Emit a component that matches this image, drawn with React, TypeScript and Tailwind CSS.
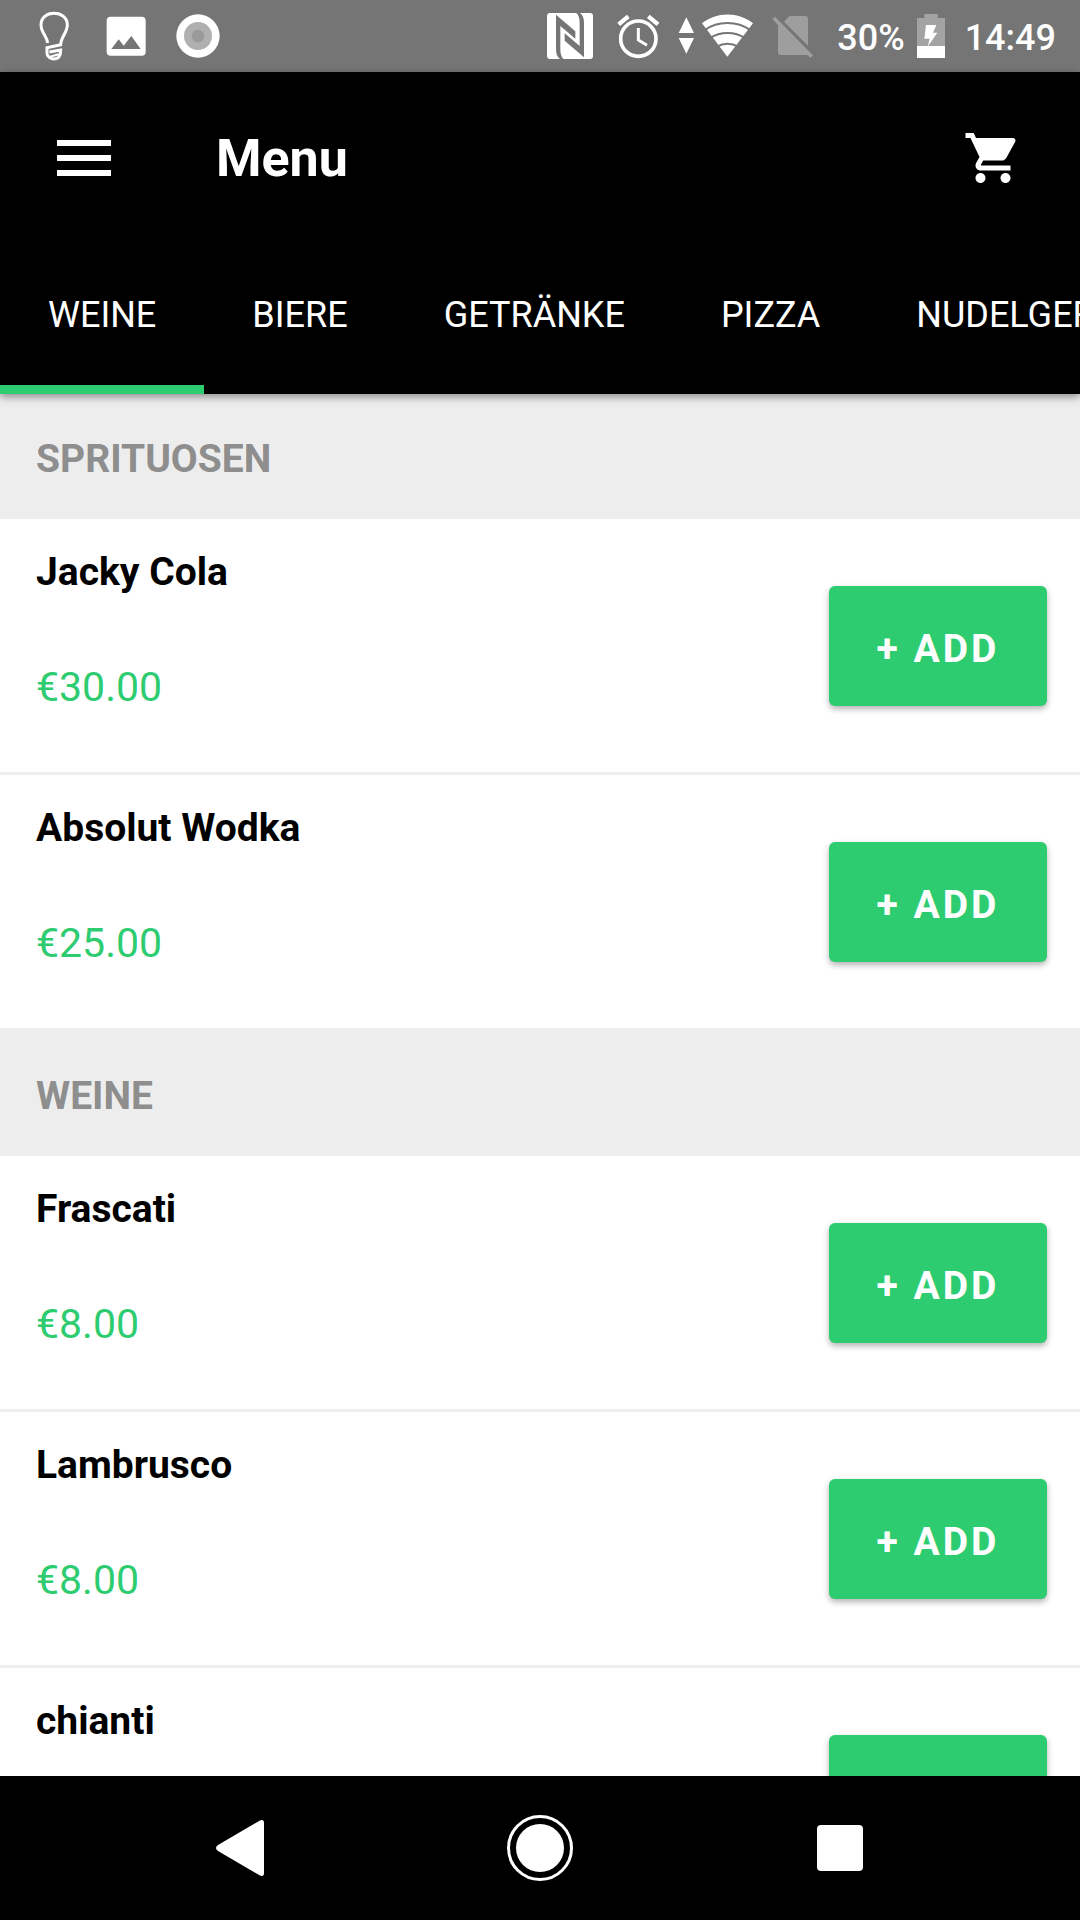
import { useState } from "react";
import { MdMenu, MdShoppingCart } from "react-icons/md";

type Item = { name: string; price: number };
type Section = { title: string; items: Item[] };

const tabs = ["Weine", "Biere", "Getränke", "Pizza", "Nudelgerichte"];

const sections: Section[] = [
  {
    title: "Sprituosen",
    items: [
      { name: "Jacky Cola", price: 30 },
      { name: "Absolut Wodka", price: 25 },
    ],
  },
  {
    title: "Weine",
    items: [
      { name: "Frascati", price: 8 },
      { name: "Lambrusco", price: 8 },
      { name: "chianti", price: 8 },
    ],
  },
];

function BulbIcon() {
  return (
    <svg viewBox="54 0 216 216" className="h-[72px] w-[72px]" fill="none" stroke="#fff" strokeWidth="9">
      <path d="M143 129C141 108 123 98 123 75C123 53 140 40 162 40C184 40 202 53 202 75C202 98 183 110 182 134L141 143V160C141 170 152 177 162 177C174 177 182 168 182 150L148 156" />
      <path d="M150 170L176 163" strokeWidth="6" />
    </svg>
  );
}

function PhotoIcon() {
  return (
    <svg viewBox="270 0 216 216" className="h-[72px] w-[72px]">
      <rect x="320" y="50" width="117" height="117" rx="12" fill="#fff" />
      <path d="M334 147L356 118L371 137L394 108L422 147Z" fill="#757575" />
    </svg>
  );
}

function RecordIcon() {
  return (
    <svg viewBox="486 0 216 216" className="h-[72px] w-[72px]">
      <circle cx="594" cy="108" r="65" fill="#fff" />
      <circle cx="594" cy="108" r="42" fill="#b0b0b0" />
      <circle cx="594" cy="108" r="19" fill="#9a9a9a" />
    </svg>
  );
}

function NfcIcon() {
  return (
    <svg viewBox="78 0 138 216" className="h-[72px] w-[46px]">
      <rect x="78" y="39" width="138" height="138" rx="9" fill="#fff" />
      <path d="M105 44L163 94V116L118 78V146C118 162 121 170 128 177H117C108 171 105 160 105 146Z" fill="#757575" />
      <path d="M189 172L131 122V100L176 138V70C176 54 173 46 166 39H177C186 45 189 56 189 70Z" fill="#757575" />
    </svg>
  );
}

function AlarmIcon() {
  return (
    <svg viewBox="288 0 129 216" className="h-[72px] w-[43px]" fill="none" stroke="#fff">
      <circle cx="352" cy="116" r="53" strokeWidth="11" />
      <path d="M352 84V120L378 136" strokeWidth="9" />
      <path d="M293 73L322 49M411 73L382 49" strokeWidth="13" />
    </svg>
  );
}

function WifiIcon() {
  return (
    <svg viewBox="471 0 228 216" className="h-[72px] w-[76px]">
      <path d="M496 52L519 99H473ZM496 161L473 114H519Z" fill="#fff" />
      <path d="M619 170L543 70C587 35 652 35 696 70Z" fill="#fff" />
      <path d="M550 91C591 62 648 62 689 91M567 114C598 94 641 94 672 114M588 140C607 128 632 128 651 140" fill="none" stroke="#757575" strokeWidth="6" />
    </svg>
  );
}

function NoSimIcon() {
  return (
    <svg viewBox="753 0 123 216" className="h-[72px] w-[41px]" fill="#9e9e9e">
      <path d="M808 48H852Q861 48 861 57V137L789 65L802 51Q805 48 808 48Z" />
      <path d="M762 50L876 166L868 174L859 165H780Q771 165 771 156V75L754 58Z" />
    </svg>
  );
}

function BatteryIcon() {
  return (
    <svg viewBox="408 0 84 216" className="h-[72px] w-7">
      <path d="M430 42H470V54H492V138H408V54H430Z" fill="#a3a3a3" />
      <path d="M408 138H492V174H408Z" fill="#fff" />
      <path d="M435 75H466L456 98H469L440 140L446 116H430Z" fill="#fff" />
    </svg>
  );
}

function StatusBar() {
  return (
    <div className="flex h-[72px] shrink-0 items-center justify-between bg-[#757575] pr-6 pl-[18px] text-4xl font-medium text-white">
      <div className="flex">
        <BulbIcon />
        <PhotoIcon />
        <RecordIcon />
      </div>
      <div className="flex items-center">
        <NfcIcon />
        <span className="ml-6"><AlarmIcon /></span>
        <span className="ml-[18px]"><WifiIcon /></span>
        <span className="ml-[18px]"><NoSimIcon /></span>
        <span className="ml-6 pt-1">30%</span>
        <span className="ml-3"><BatteryIcon /></span>
        <span className="ml-5 pt-1">14:49</span>
      </div>
    </div>
  );
}

function MenuRow({ item, onAdd }: { item: Item; onAdd: () => void }) {
  return (
    <li className="flex items-center justify-between border-b-[3px] border-[#ededed] pr-[33px] pl-9">
      <div className="flex h-[253px] flex-col pt-7">
        <h3 className="text-[39px] leading-[50px] font-bold text-black">{item.name}</h3>
        <p className="mt-16 text-[41px] leading-[52px] text-[#2ecc71]">€{item.price.toFixed(2)}</p>
      </div>
      <button
        type="button"
        onClick={onAdd}
        className="h-[120px] w-[218px] rounded-md bg-[#2ecc71] pt-2 text-[39px] font-bold tracking-[3px] text-white shadow-[0_3px_6px_rgba(0,0,0,0.3)]"
      >
        + ADD
      </button>
    </li>
  );
}

function NavBar() {
  return (
    <nav className="grid h-36 shrink-0 grid-cols-3 bg-black px-[90px]">
      <button type="button" aria-label="Back" className="flex items-center justify-center">
        <svg viewBox="0 0 72 72" className="h-[72px] w-[72px]" fill="#fff">
          <path d="M14 33L56 8.500Q60 7 60 11V61Q60 65 56 63.500L14 39Q10 36 14 33Z" />
        </svg>
      </button>
      <button type="button" aria-label="Home" className="flex items-center justify-center">
        <svg viewBox="0 0 72 72" className="h-[72px] w-[72px]" fill="#fff">
          <circle cx="36" cy="36" r="31.500" fill="none" stroke="#fff" strokeWidth="3" />
          <circle cx="36" cy="36" r="24" />
        </svg>
      </button>
      <button type="button" aria-label="Recent apps" className="flex items-center justify-center">
        <svg viewBox="0 0 72 72" className="h-[72px] w-[72px]" fill="#fff">
          <rect x="13" y="13" width="46" height="46" rx="4" />
        </svg>
      </button>
    </nav>
  );
}

export default function App() {
  const [active, setActive] = useState(tabs[0]);
  const [, setCart] = useState<Item[]>([]);

  return (
    <div className="flex h-screen flex-col overflow-hidden bg-white font-['Roboto',sans-serif]">
      <StatusBar />

      <header className="z-10 shrink-0 bg-black text-white shadow-[0_3px_8px_rgba(0,0,0,0.4)]">
        <div className="flex h-[172px] items-center pr-[57px] pl-12">
          <button type="button" aria-label="Open navigation">
            <MdMenu className="h-[72px] w-[72px]" />
          </button>
          <h1 className="ml-24 pt-[2px] text-[52px] leading-[60px] font-bold">Menu</h1>
          <button type="button" aria-label="Cart" className="ml-auto">
            <MdShoppingCart className="h-[60px] w-[60px]" />
          </button>
        </div>
        <div role="tablist" className="flex h-[150px] overflow-hidden">
          {tabs.map((tab) => (
            <button
              key={tab}
              type="button"
              role="tab"
              aria-selected={active === tab}
              onClick={() => setActive(tab)}
              className={`shrink-0 border-b-[9px] px-12 text-4xl uppercase ${
                active === tab ? "border-[#2ecc71]" : "border-transparent"
              }`}
            >
              {tab}
            </button>
          ))}
        </div>
      </header>

      <main className="min-h-0 flex-1 overflow-hidden">
        {sections.map((section) => (
          <section key={section.title}>
            <h2 className="flex h-[125px] items-center bg-[#ededed] pt-[6px] pl-9 text-[39px] font-bold text-[#8e8e8e] uppercase">
              {section.title}
            </h2>
            <ul>
              {section.items.map((item) => (
                <MenuRow key={item.name} item={item} onAdd={() => setCart((c) => [...c, item])} />
              ))}
            </ul>
          </section>
        ))}
      </main>

      <NavBar />
    </div>
  );
}
